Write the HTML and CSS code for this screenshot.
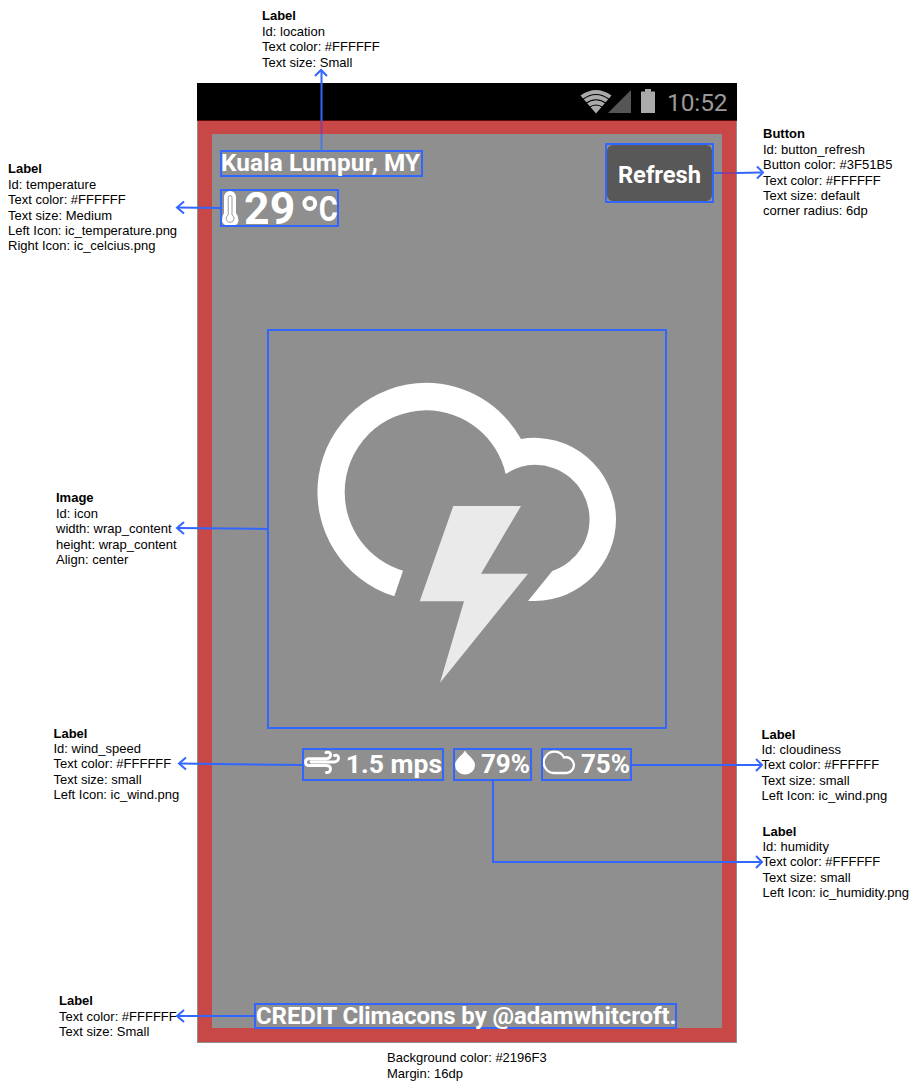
FILE: index.html
```html
<!DOCTYPE html>
<html lang="en">
<head>
<meta charset="utf-8">
<title>Weather screen specification</title>
<link rel="stylesheet" href="styles.css">
</head>
<body>
<main class="board">
  <section class="phone">
    <header class="status">
      <svg class="status-icons" width="75" height="25" viewBox="580 89 75 25">
        <path d="M580.500 95.500Q596 84.500 611.500 95.500L596 113.500Z" fill="#aaa"/>
        <path d="M582.500 99.500Q596 89.500 609.500 99.500M585.500 103.500Q596 96 606.500 103.500M589 107.500Q596 102.500 603 107.500" fill="none" stroke="#000" stroke-width="1.100"/>
        <path d="M608 113L631 90V113Z" fill="#555"/>
        <path d="M641 91.500H645V89H651V91.500H655V113H641Z" fill="#aaa"/>
      </svg>
      <span class="time">10:52</span>
    </header>
    <div class="edge">
    <div class="screen">
      <div class="top">
        <div class="readings">
          <div class="outlined location"><span>Kuala Lumpur, MY</span></div>
          <div class="outlined temperature">
            <svg class="thermo" width="17" height="34" viewBox="222 191 17 34">
              <path d="M224 197a6 6 0 0 1 12 0V213Q238.500 216 238.500 220.500Q237.500 225 235 225H225Q222 223 222 220.500Q222 216 224 213Z" fill="#fff"/>
              <path d="M228.200 197.500a1.900 1.900 0 0 1 3.800 0V215a3.900 3.900 0 1 1-3.800 0Z" fill="none" stroke="#8f8f8f" stroke-width=".9"/>
            </svg>
            <span class="degrees">29</span>
            <svg class="celsius" width="36" height="34" viewBox="301 191 36 34">
              <circle cx="309.800" cy="203.500" r="5.400" fill="none" stroke="#fff" stroke-width="4"/>
              <text x="318.800" y="221" textLength="19" lengthAdjust="spacingAndGlyphs">C</text>
            </svg>
          </div>
        </div>
        <div class="outlined refresh"><button type="button">Refresh</button></div>
      </div>
      <div class="outlined picture">
        <svg width="396" height="396" viewBox="269 331 396 396">
          <path fill="#fff" d="M394.300 596.300A109.200 109.200 0 0 1 426.300 382.800A109.200 109.200 0 0 1 521 439A81.500 81.500 0 0 1 616 519.500A81.500 81.500 0 0 1 535 601H528L552.300 571A54.500 54.500 0 0 0 535 464.800A54.500 54.500 0 0 0 505.700 474A81.700 81.700 0 0 0 426.300 410.300A81.700 81.700 0 0 0 344.700 492A81.700 81.700 0 0 0 403 570.700Z"/>
          <path fill="#eaeaea" d="M453.300 506H521L481 573.700H528L440 682.700L464 601.300H419.700Z"/>
        </svg>
      </div>
      <div class="stats">
        <div class="outlined stat wind">
          <svg width="38" height="29" viewBox="304 750 38 29">
            <path d="M326 752.500Q331 751.500 330.500 755.500Q330 758.700 326 758.700H309Q305.500 758.700 305.500 762Q305.500 765.500 309 765.500H326Q330.500 765.500 330.500 769Q330 773 326.500 772.500M311 762H334Q338.500 761.500 338.500 758Q338.500 754.500 334.500 755.500" fill="none" stroke="#fff" stroke-width="2.900" stroke-linecap="round"/>
          </svg>
          <span>1.5 mps</span>
        </div>
        <div class="outlined stat humidity">
          <svg width="20" height="29" viewBox="455 750 20 29">
            <path d="M465 750.500C467 755 475 759 475 765A10 9.500 0 0 1 455 765C455 759 463 755 465 750.500Z" fill="#fff"/>
          </svg>
          <span>79%</span>
        </div>
        <div class="outlined stat cloudiness">
          <svg width="33" height="29" viewBox="543 750 33 29">
            <path d="M553.500 773A10.700 10.700 0 1 1 564 757.500A8 7.900 0 1 1 567 773Z" fill="none" stroke="#fff" stroke-width="2.300"/>
          </svg>
          <span>75%</span>
        </div>
      </div>
      <div class="outlined credit"><span>CREDIT Climacons by @adamwhitcroft.</span></div>
    </div>
    </div>
  </section>

  <svg class="connectors" width="917" height="1089" viewBox="0 0 917 1089">
    <path d="M321.500 70V121M221 208L178 207.500M268 529L178 528M303 765L180 763.500M255 1016H178M632 765H761M493 780V862H761M736 173L761 172.500"/>
    <path class="over-red" d="M321.500 121V134M722 173H736"/>
    <path class="over-grey" d="M321.500 134V151"/>
    <path d="M714 173H722"/>
    <path d="M315 76L321 70L327 76M184 201.500L177 207.500L184 213.500M184 522L177 528L184 534M186 757.500L179 763.500L186 769.500M184 1010L177 1016L184 1022M756 759L762 765L756 771M756 856L762 862L756 868M757 166.500L763 172.500L757 178.500"/>
  </svg>

  <p class="note n-location"><b>Label</b><br>Id: location<br>Text color: #FFFFFF<br>Text size: Small</p>
  <p class="note n-temperature"><b>Label</b><br>Id: temperature<br>Text color: #FFFFFF<br>Text size: Medium<br>Left Icon: ic_temperature.png<br>Right Icon: ic_celcius.png</p>
  <p class="note n-image"><b>Image</b><br>Id: icon<br>width: wrap_content<br>height: wrap_content<br>Align: center</p>
  <p class="note n-wind"><b>Label</b><br>Id: wind_speed<br>Text color: #FFFFFF<br>Text size: small<br>Left Icon: ic_wind.png</p>
  <p class="note n-credit"><b>Label</b><br>Text color: #FFFFFF<br>Text size: Small</p>
  <p class="note n-button"><b>Button</b><br>Id: button_refresh<br>Button color: #3F51B5<br>Text color: #FFFFFF<br>Text size: default<br>corner radius: 6dp</p>
  <p class="note n-cloud"><b>Label</b><br>Id: cloudiness<br>Text color: #FFFFFF<br>Text size: small<br>Left Icon: ic_wind.png</p>
  <p class="note n-humidity"><b>Label</b><br>Id: humidity<br>Text color: #FFFFFF<br>Text size: small<br>Left Icon: ic_humidity.png</p>
  <p class="note n-background">Background color: #2196F3<br>Margin: 16dp</p>
</main>
</body>
</html>
```

FILE: styles.css
```css
* { box-sizing: border-box; }
body { margin: 0; background: #fff; }

.board {
  position: relative;
  width: 917px;
  height: 1089px;
  padding: 83px 180px 46px 197px;
  overflow: hidden;
}

.phone {
  display: flex;
  flex-direction: column;
  width: 540px;
  height: 960px;
  font-family: Roboto, "Liberation Sans", sans-serif;
  font-weight: 700;
  color: #fff;
}
.phone svg { display: block; flex: none; }

.status {
  display: flex;
  justify-content: flex-end;
  align-items: flex-start;
  height: 38px;
  padding: 6px 9px 0 0;
  background: #000;
  border-bottom: 1px solid #5d0b0b;
}
.time {
  margin-left: 12px;
  width: 61px;
  font-size: 24.5px;
  line-height: 27px;
  font-weight: 400;
  letter-spacing: -.1px;
  white-space: nowrap;
  color: #999;
}

.edge {
  flex: 1;
  display: flex;
  padding: 0 1px 1px;
  background: #8f8f8f;
}
.screen {
  flex: 1;
  display: flex;
  flex-direction: column;
  align-items: center;
  background: #8f8f8f;
  border: 14px solid #c84747;
  border-top-width: 13px;
}

.outlined {
  border: 2px solid #36f;
  white-space: nowrap;
}

.top {
  display: flex;
  justify-content: space-between;
  width: 510px;
  padding: 9px 8px 0;
}
.readings {
  display: flex;
  flex-direction: column;
  gap: 12px;
  padding-top: 7px;
}
.location {
  width: 203px;
  height: 27px;
  font-size: 24.3px;
  line-height: 22px;
  letter-spacing: .13px;
}
.location span { margin-left: -1px; }
.temperature {
  display: flex;
  width: 119px;
  height: 38px;
}
.degrees {
  width: 57px;
  margin-left: 5px;
  font-size: 44.5px;
  line-height: 37px;
  letter-spacing: .2px;
}
.celsius { overflow: visible; }
.celsius text {
  font-size: 35px;
  font-weight: 700;
  fill: #fff;
}
.refresh {
  width: 109px;
  height: 60px;
  background: #8f8f8f;
}
.refresh button {
  display: block;
  width: 105px;
  height: 56px;
  padding: 4px 0 0;
  border: 0;
  border-radius: 6px;
  background: #585858;
  color: #fff;
  font: inherit;
  font-size: 23.7px;
}

.picture {
  width: 400px;
  height: 400px;
  margin-top: 102px;
}

.stats {
  display: flex;
  gap: 9px;
  margin-top: 19px;
}
.stat {
  display: flex;
  justify-content: space-between;
  height: 33px;
  font-size: 26px;
  line-height: 28px;
}
.wind {
  width: 142px;
  font-size: 26.5px;
}
.humidity { width: 79px; }
.cloudiness { width: 91px; }

.credit {
  width: 423px;
  height: 26px;
  margin: auto 3px -1px 0;
  font-size: 24px;
  line-height: 23px;
  letter-spacing: -.09px;
}

.connectors {
  position: absolute;
  inset: 0;
  fill: none;
  stroke: #36f;
  stroke-width: 2;
}
.over-red { stroke: #963c87; }
.over-grey { stroke: #4d79df; }

.note {
  position: absolute;
  margin: 0;
  font: 13px/15.4px "Liberation Sans", Arial, sans-serif;
  color: #000;
  white-space: nowrap;
}
.n-location { left: 262px; top: 8.4px; }
.n-temperature { left: 8px; top: 161.3px; }
.n-image { left: 56px; top: 490.3px; }
.n-wind { left: 53.5px; top: 725.6px; }
.n-credit { left: 59px; top: 993.3px; }
.n-button { left: 763px; top: 126.3px; }
.n-cloud { left: 761.5px; top: 726.6px; }
.n-humidity { left: 762.5px; top: 823.6px; }
.n-background { left: 387px; top: 1050.3px; }
```
